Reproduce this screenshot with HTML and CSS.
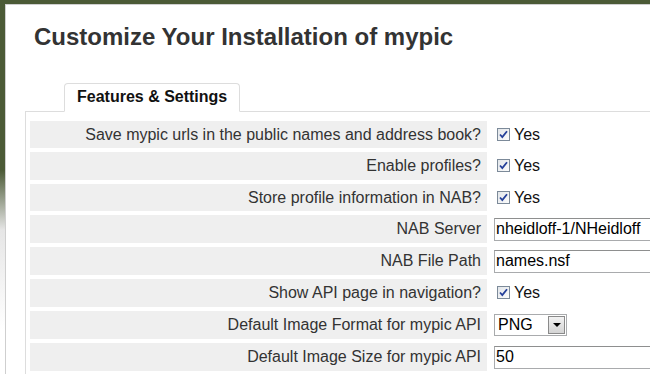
FILE: index.html
```html
<!DOCTYPE html>
<html lang="en">
<head>
  <meta charset="UTF-8">
  <meta name="viewport" content="width=device-width, initial-scale=1.0">
  <title>Customize Your Installation of mypic</title>
  <link rel="stylesheet" href="styles.css">
</head>
<body>

  <div class="page">
    <h1>Customize Your Installation of mypic</h1>

    <div class="tabs">
      <div class="tab">Features &amp; Settings</div>
    </div>

    <div class="tab-body">
      <table class="settings">
        <colgroup>
          <col class="col-label">
          <col class="col-value">
        </colgroup>
        <tr>
          <td class="label">Save mypic urls in the public names and address book?</td>
          <td class="value"><span class="check"><svg width="11" height="11" viewBox="0 0 11 11"><path d="M2 5.5 L4.3 8 L9 2.2" fill="none" stroke="#243f99" stroke-width="1.8"/></svg></span>Yes</td>
        </tr>
        <tr class="tall">
          <td class="label">Enable profiles?</td>
          <td class="value"><span class="check"><svg width="11" height="11" viewBox="0 0 11 11"><path d="M2 5.5 L4.3 8 L9 2.2" fill="none" stroke="#243f99" stroke-width="1.8"/></svg></span>Yes</td>
        </tr>
        <tr>
          <td class="label">Store profile information in NAB?</td>
          <td class="value"><span class="check"><svg width="11" height="11" viewBox="0 0 11 11"><path d="M2 5.5 L4.3 8 L9 2.2" fill="none" stroke="#243f99" stroke-width="1.8"/></svg></span>Yes</td>
        </tr>
        <tr class="tall">
          <td class="label">NAB Server</td>
          <td class="value"><input class="text-field" type="text" value="nheidloff-1/NHeidloff"></td>
        </tr>
        <tr class="tall">
          <td class="label">NAB File Path</td>
          <td class="value"><input class="text-field" type="text" value="names.nsf"></td>
        </tr>
        <tr class="tall">
          <td class="label">Show API page in navigation?</td>
          <td class="value"><span class="check"><svg width="11" height="11" viewBox="0 0 11 11"><path d="M2 5.5 L4.3 8 L9 2.2" fill="none" stroke="#243f99" stroke-width="1.8"/></svg></span>Yes</td>
        </tr>
        <tr class="tall">
          <td class="label">Default Image Format for mypic API</td>
          <td class="value">
            <div class="select">
              <span class="select-text">PNG</span>
              <span class="select-btn"><svg width="8" height="4" viewBox="0 0 8 4"><path d="M0 0 H8 L4 4 Z" fill="#000"/></svg></span>
            </div>
          </td>
        </tr>
        <tr class="tall">
          <td class="label">Default Image Size for mypic API</td>
          <td class="value"><input class="text-field" type="text" value="50"></td>
        </tr>
      </table>
    </div>
  </div>

</body>
</html>
```

FILE: styles.css
```css
body {
  margin: 0;
  font-family: 'Liberation Sans', Arial, sans-serif;
  background: linear-gradient(#4b5a36 0, #4b5a36 170px, #e6e6e6 230px, #fff 330px);
  height: 374px;
  overflow: hidden;
}

.page {
  margin: 4px 0 0 5px;
  background: #fff;
  border-top: 1px solid #cfcfcf;
  border-left: 1px solid #cfcfcf;
  height: 400px;
  width: 700px;
}

h1 {
  margin: 0;
  padding: 18px 0 0 28px;
  font-size: 24px;
  line-height: 28px;
  font-weight: bold;
  color: #333;
}

.tabs {
  display: flex;
  margin: 32px 0 0 19px;
  padding-left: 39px;
  border-bottom: 1px solid #ddd;
}

.tab {
  margin-bottom: -1px;
  padding: 4px 12px 5px;
  background: #fff;
  border: 1px solid #ddd;
  border-bottom-color: #fff;
  border-radius: 4px 4px 0 0;
  font-size: 16px;
  line-height: 18px;
  font-weight: bold;
  color: #111;
}

.tab-body {
  margin-left: 19px;
  border-left: 1px solid #ddd;
  padding-top: 5px;
  height: 300px;
}

.settings {
  table-layout: fixed;
  width: 669px;
  border-spacing: 4px;
  font-size: 16px;
  color: #333;
}

.col-label {
  width: 457px;
}

.col-value {
  width: 200px;
}

.settings td {
  height: 27px;
  padding: 0;
  white-space: nowrap;
}

.settings tr.tall td {
  height: 28px;
}

.label {
  padding-right: 6px !important;
  background-color: #efefef;
  text-align: right;
}

.value {
  padding-left: 3px !important;
  color: #111;
}

.check {
  display: inline-block;
  vertical-align: -1px;
  width: 11px;
  height: 11px;
  margin: 0 4px 0 3px;
  border: 1px solid #7c8a99;
  background: linear-gradient(135deg, #e2e6ea, #fbfbfb);
}

.check svg {
  display: block;
}

.text-field {
  display: block;
  box-sizing: border-box;
  width: 220px;
  height: 23px;
  margin: 0;
  padding: 0 1px;
  border: 1px solid #a9abad;
  border-top-color: #8e8f8f;
  font-family: 'Liberation Sans', Arial, sans-serif;
  font-size: 16px;
  color: #000;
}

.select {
  display: flex;
  align-items: center;
  box-sizing: border-box;
  width: 73px;
  height: 22px;
  border: 1px solid #a9abad;
  background: #fff;
}

.select-text {
  flex: 1;
  padding-left: 3px;
  font-size: 16px;
  color: #000;
}

.select-btn {
  display: flex;
  align-items: center;
  justify-content: center;
  box-sizing: border-box;
  width: 17px;
  height: 18px;
  margin-right: 1px;
  border: 1px solid #8a8a8a;
  background: linear-gradient(#f2f2f2, #d4d4d4);
}
```
